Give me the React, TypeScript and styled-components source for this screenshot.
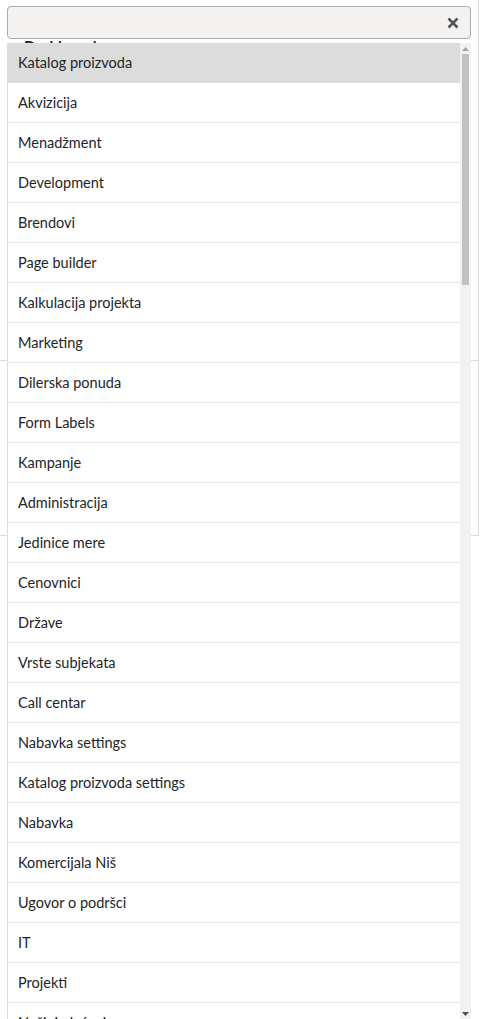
import styled, { createGlobalStyle } from "styled-components";

const GlobalStyle = createGlobalStyle`
    body {
        margin: 0;
        background: #fff;
        font-family: "Lato", "Noto Sans", sans-serif;
        color: #212529;
    }
`;

const Page = styled.div`
    position: relative;
    height: 1019px;
    overflow: hidden;
`;

const Card = styled.div`
    margin-right: 2px;
    border-right: 1px solid #dcdcdc;
`;

const CardSection = styled.div<{ h: number }>`
    height: ${(p) => p.h}px;
    border-bottom: 1px solid #dcdcdc;
    box-sizing: border-box;
    padding: 37px 0 0 24px;
`;

const SectionTitle = styled.div`
    font-size: 15px;
    font-weight: 700;
    color: #222;
`;

const SelectWrap = styled.div`
    position: absolute;
    top: 6px;
    left: 7px;
    width: 464px;
`;

const Control = styled.div`
    height: 33px;
    box-sizing: border-box;
    border: 1px solid #aaa;
    border-radius: 4px;
    background: #f3f2f0;
    display: flex;
    align-items: center;
    justify-content: flex-end;
    padding-right: 11px;
`;

const Clear = styled.span`
    display: flex;
    cursor: pointer;
`;

const Dropdown = styled.div`
    margin-top: 4px;
    height: 976px;
    display: flex;
    border-left: 1px solid #dcdcdc;
    background: #fff;
    overflow: hidden;
`;

const Options = styled.ul`
    flex: 1;
    margin: 0;
    padding: 0;
    list-style: none;
`;

const Option = styled.li<{ active?: boolean }>`
    height: 40px;
    box-sizing: border-box;
    display: flex;
    align-items: center;
    padding-left: 10px;
    font-size: 14.5px;
    border-bottom: 1px solid ${(p) => (p.active ? "#dcdcdc" : "#e6e6e6")};
    background: ${(p) => (p.active ? "#dcdcdc" : "#fff")};
`;

const ScrollTrack = styled.div`
    width: 11px;
    background: #f1f1f1;
    display: flex;
    flex-direction: column;
    align-items: center;
`;

const Arrow = styled.div`
    height: 11px;
    display: flex;
    align-items: center;
    justify-content: center;
`;

const Thumb = styled.div`
    width: 7px;
    height: 231px;
    background: #c1c1c1;
`;

const Filler = styled.div`
    flex: 1;
`;

const items = [
    "Katalog proizvoda",
    "Akvizicija",
    "Menadžment",
    "Development",
    "Brendovi",
    "Page builder",
    "Kalkulacija projekta",
    "Marketing",
    "Dilerska ponuda",
    "Form Labels",
    "Kampanje",
    "Administracija",
    "Jedinice mere",
    "Cenovnici",
    "Države",
    "Vrste subjekata",
    "Call centar",
    "Nabavka settings",
    "Katalog proizvoda settings",
    "Nabavka",
    "Komercijala Niš",
    "Ugovor o podršci",
    "IT",
    "Projekti",
    "Načini plaćanja",
];

function App() {
    return (
        <Page>
            <GlobalStyle />
            <Card>
                <CardSection h={361}>
                    <SectionTitle>Dashboard</SectionTitle>
                </CardSection>
                <CardSection h={175} />
            </Card>
            <SelectWrap>
                <Control>
                    <Clear>
                        <svg width="12" height="12" viewBox="0 0 12 12">
                            <path d="M1.5 1.5 L10.5 10.5 M10.5 1.5 L1.5 10.5" stroke="#555" strokeWidth="2.6" strokeLinecap="butt" />
                        </svg>
                    </Clear>
                </Control>
                <Dropdown>
                    <Options>
                        {items.map((item, i) => (
                            <Option key={item} active={i === 0}>
                                {item}
                            </Option>
                        ))}
                    </Options>
                    <ScrollTrack>
                        <Arrow>
                            <svg width="7" height="4" viewBox="0 0 7 4">
                                <path d="M3.5 0 L7 4 L0 4 Z" fill="#a3a3a3" />
                            </svg>
                        </Arrow>
                        <Thumb />
                        <Filler />
                        <Arrow>
                            <svg width="7" height="4" viewBox="0 0 7 4">
                                <path d="M0 0 L7 0 L3.5 4 Z" fill="#505050" />
                            </svg>
                        </Arrow>
                    </ScrollTrack>
                </Dropdown>
            </SelectWrap>
        </Page>
    );
}

export default App;
